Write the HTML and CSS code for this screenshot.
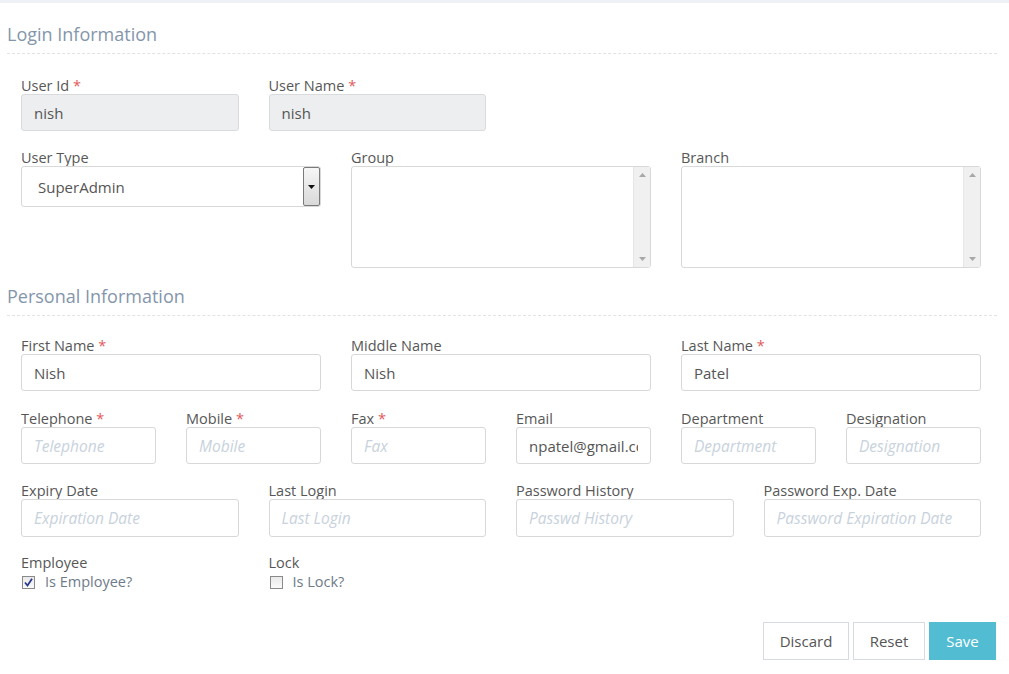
FILE: index.html
```html
<!DOCTYPE html>
<html>
<head>
<meta charset="utf-8">
<link rel="stylesheet" href="styles.css">
</head>
<body>
<div class="topbar"></div>
<div class="page">
  <h2 class="section-title">Login Information</h2>
  <div class="grid g4 row-login">
    <div class="field">
      <label class="lbl">User Id <span class="req">*</span></label>
      <input class="inp disabled" value="nish" disabled>
    </div>
    <div class="field">
      <label class="lbl">User Name <span class="req">*</span></label>
      <input class="inp disabled" value="nish" disabled>
    </div>
  </div>
  <div class="grid g3 row-type">
    <div class="field">
      <label class="lbl">User Type</label>
      <div class="select">
        <span class="select-text">SuperAdmin</span>
        <span class="select-btn"><svg width="7" height="4" viewBox="0 0 7 4"><path d="M0 0H7L3.5 4Z" fill="#111"/></svg></span>
      </div>
    </div>
    <div class="field">
      <label class="lbl">Group</label>
      <div class="listbox">
        <div class="sbar"><svg width="7" height="4" viewBox="0 0 7 4"><path d="M0 4H7L3.5 0Z" fill="#a8a8a8"/></svg><svg width="7" height="4" viewBox="0 0 7 4"><path d="M0 0H7L3.5 4Z" fill="#a8a8a8"/></svg></div>
      </div>
    </div>
    <div class="field">
      <label class="lbl">Branch</label>
      <div class="listbox">
        <div class="sbar"><svg width="7" height="4" viewBox="0 0 7 4"><path d="M0 4H7L3.5 0Z" fill="#a8a8a8"/></svg><svg width="7" height="4" viewBox="0 0 7 4"><path d="M0 0H7L3.5 4Z" fill="#a8a8a8"/></svg></div>
      </div>
    </div>
  </div>

  <h2 class="section-title personal">Personal Information</h2>
  <div class="grid g3 row-names">
    <div class="field">
      <label class="lbl">First Name <span class="req">*</span></label>
      <input class="inp" value="Nish">
    </div>
    <div class="field">
      <label class="lbl">Middle Name</label>
      <input class="inp" value="Nish">
    </div>
    <div class="field">
      <label class="lbl">Last Name <span class="req">*</span></label>
      <input class="inp" value="Patel">
    </div>
  </div>
  <div class="grid g6 row-contact">
    <div class="field">
      <label class="lbl">Telephone <span class="req">*</span></label>
      <input class="inp" placeholder="Telephone">
    </div>
    <div class="field">
      <label class="lbl">Mobile <span class="req">*</span></label>
      <input class="inp" placeholder="Mobile">
    </div>
    <div class="field">
      <label class="lbl">Fax <span class="req">*</span></label>
      <input class="inp" placeholder="Fax">
    </div>
    <div class="field">
      <label class="lbl">Email</label>
      <input class="inp" value="npatel@gmail.com">
    </div>
    <div class="field">
      <label class="lbl">Department</label>
      <input class="inp" placeholder="Department">
    </div>
    <div class="field">
      <label class="lbl">Designation</label>
      <input class="inp" placeholder="Designation">
    </div>
  </div>
  <div class="grid g4 row-dates">
    <div class="field">
      <label class="lbl">Expiry Date</label>
      <input class="inp" placeholder="Expiration Date">
    </div>
    <div class="field">
      <label class="lbl">Last Login</label>
      <input class="inp" placeholder="Last Login">
    </div>
    <div class="field">
      <label class="lbl">Password History</label>
      <input class="inp" placeholder="Passwd History">
    </div>
    <div class="field">
      <label class="lbl">Password Exp. Date</label>
      <input class="inp" placeholder="Password Expiration Date">
    </div>
  </div>
  <div class="grid g4 row-checks">
    <div class="field">
      <span class="lbl">Employee</span>
      <label class="check"><span class="box checked"><svg width="9" height="9" viewBox="0 0 9 9"><path d="M1 4.5L3.5 7.5L8 0.8" fill="none" stroke="#2a3a8c" stroke-width="1.8"/></svg></span>Is Employee?</label>
    </div>
    <div class="field">
      <span class="lbl">Lock</span>
      <label class="check"><span class="box"></span>Is Lock?</label>
    </div>
  </div>
  <div class="actions">
    <button class="btn btn-discard">Discard</button>
    <button class="btn btn-reset">Reset</button>
    <button class="btn primary">Save</button>
  </div>
</div>
</body>
</html>
```
FILE: styles.css
```css
* { box-sizing: border-box; }
html, body { margin: 0; padding: 0; background: #fff; }
body {
  font-family: "Open Sans", "Noto Sans", sans-serif;
  font-size: 14.5px;
  color: #555;
}
.topbar { height: 3px; background: #eef1f5; }
.page { padding: 0 12px 0 7px; }
.section-title {
  margin: 0;
  font-weight: 400;
  font-size: 18px;
  line-height: 24px;
  color: #8496ab;
  padding-top: 19px;
  padding-bottom: 7px;
  border-bottom: 1px dashed #e0e3e6;
}
.section-title.personal { padding-top: 16px; padding-bottom: 7px; }
.grid { display: grid; column-gap: 30px; margin: 0 16px 0 14px; }
.g3 { grid-template-columns: repeat(3, 1fr); }
.g4 { grid-template-columns: repeat(4, 1fr); }
.g6 { grid-template-columns: repeat(6, 1fr); }
.field { display: flex; flex-direction: column; min-width: 0; }
.lbl { font-size: 14.5px; line-height: 17px; color: #575757; }
.req { color: #e25a5a; }
.inp {
  font-family: inherit;
  font-size: 15px;
  color: #555;
  height: 37px;
  width: 100%;
  border: 1px solid #d8d8d8;
  border-radius: 3px;
  padding: 0 12px;
  background: #fff;
  outline: none;
}
.inp.disabled { background: #eceeef; border-color: #d8dadc; }
.inp::placeholder { color: #c8d2dc; font-style: italic; font-size: 15.5px; }
.row-login { margin-top: 23px; }
.row-type { margin-top: 18px; }
.row-names { margin-top: 21px; }
.row-contact { margin-top: 19px; }
.row-dates { margin-top: 18px; }
.row-dates .inp { height: 38px; }
.row-checks { margin-top: 17px; }
.select {
  height: 41px;
  border: 1px solid #d8d8d8;
  border-radius: 3px;
  display: flex;
  align-items: center;
  width: 300px;
  padding: 0 0 0 16px;
  font-size: 15px;
}
.select-text { flex: 1; }
.select-btn {
  width: 17px;
  height: 39px;
  border: 1px solid #7a7a7a;
  border-radius: 2px;
  background: linear-gradient(#f6f6f6, #d9d9d9);
  display: flex;
  align-items: center;
  justify-content: center;
}
.listbox {
  height: 102px;
  border: 1px solid #d8d8d8;
  border-radius: 3px;
  display: flex;
  justify-content: flex-end;
}
.sbar {
  width: 17px;
  background: #f0f0f0;
  border-left: 1px solid #e6e6e6;
  display: flex;
  flex-direction: column;
  justify-content: space-between;
  align-items: center;
  padding: 6px 0;
}
.check { display: flex; align-items: center; color: #6e7b88; font-size: 14.5px; line-height: 18px; margin-top: 2px; }
.box {
  width: 13px; height: 13px;
  border: 1px solid #8a8a8a;
  background: linear-gradient(#e9e9e9, #fafafa);
  margin: 0 10px 0 1px;
  display: flex; align-items: center; justify-content: center;
}
.actions {
  display: flex;
  justify-content: flex-end;
  gap: 4px;
  margin-top: 31px;
  margin-right: 1px;
}
.btn {
  font-family: inherit;
  font-size: 15px;
  height: 38px;
  padding: 0;
  background: #fff;
  border: 1px solid #d5dbe1;
  color: #555;
  border-radius: 0;
}
.btn-discard { width: 86px; }
.btn-reset { width: 72px; }
.btn.primary { width: 67px; background: #52bcd3; border-color: #52bcd3; color: #fff; }
```
